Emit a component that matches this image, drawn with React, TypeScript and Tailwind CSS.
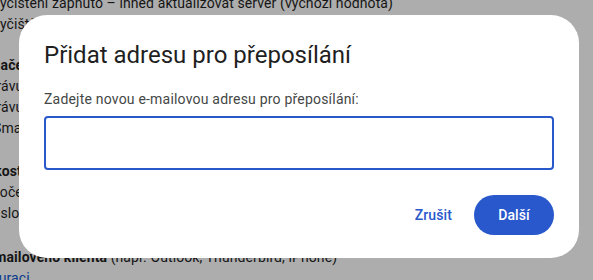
import React from "react";

type PageLine = {
  text: string;
  cut: string;
  bold?: boolean;
  tail?: string;
  link?: boolean;
};

// settings page lying under the dialog; each line is clipped at the left edge
const sections: PageLine[][] = [
  [
    { text: "Vyčištění zapnuto – ihned aktualizovat server (výchozí hodnota)", cut: "-ml-[9px]" },
    { text: "Vyčištění vypnuto – počkat, až klient aktualizuje server", cut: "-ml-[9px]" },
  ],
  [
    { text: "Značení zprávy jako smazané a vyčištěné ze složky IMAP:", cut: "-ml-[16px]", bold: true },
    { text: "Zprávu archivovat (výchozí hodnota)", cut: "-ml-[20px]" },
    { text: "Zprávu přesunout do koše", cut: "-ml-[20px]" },
    { text: "Smazat zprávu okamžitě a navždy", cut: "-ml-[7px]" },
  ],
  [
    { text: "Velikosti složek", cut: "-ml-[30px]", bold: true },
    { text: "Počet zpráv ve složkách IMAP neomezovat (výchozí hodnota)", cut: "-ml-[9px]" },
    { text: "Omezit složky IMAP tak, aby obsahovaly nejvýše tento počet zpráv", cut: "-ml-[48px]" },
  ],
  [
    {
      text: "Konfigurace e-mailového klienta",
      tail: " (např. Outlook, Thunderbird, iPhone)",
      cut: "-ml-[100px]",
      bold: true,
    },
    { text: "Pokyny ke konfiguraci", cut: "-ml-[108px]", link: true },
  ],
];

const sectionGap = ["mb-[20px]", "mb-[22px]", "mb-[23px]", ""];

function SettingsPage() {
  return (
    <div className="-mt-[7px] text-[14px] leading-[21px] tracking-[0.1px] text-[#1f1f1f]">
      {sections.map((lines, i) => (
        <div key={i} className={sectionGap[i]}>
          {lines.map((line) => (
            <p key={line.text} className={`${line.cut} whitespace-nowrap`}>
              {line.link ? (
                <span className="text-[#0b57d0] underline">{line.text}</span>
              ) : (
                <span className={line.bold ? "font-bold" : ""}>{line.text}</span>
              )}
              {line.tail ? <span>{line.tail}</span> : null}
            </p>
          ))}
        </div>
      ))}
    </div>
  );
}

function ForwardingDialog() {
  return (
    <div className="flex w-[560px] flex-col rounded-[28px] bg-white px-[25px] pb-[23px] pt-[24px]">
      <h2 className="text-[24px] font-normal leading-[32px] text-[#1f1f1f]">
        Přidat adresu pro přeposílání
      </h2>
      <label
        htmlFor="forward-to"
        className="mt-[18px] text-[14px] leading-[20px] tracking-[0.2px] text-[#444746]"
      >
        Zadejte novou e-mailovou adresu pro přeposílání:
      </label>
      <input
        id="forward-to"
        type="email"
        className="mt-[7px] h-[54px] w-full rounded-[4px] border-2 border-[#2858cc] px-4 text-[16px] text-[#1f1f1f] outline-none"
      />
      <div className="mt-[25px] flex items-center justify-end gap-[10px]">
        <button
          type="button"
          className="h-10 rounded-full px-3 text-[14px] font-medium tracking-[0.1px] text-[#2858cc]"
        >
          Zrušit
        </button>
        <button
          type="button"
          className="h-10 w-[80px] rounded-full bg-[#2858cc] text-[14px] font-medium tracking-[0.1px] text-white"
        >
          Další
        </button>
      </div>
    </div>
  );
}

export default function App() {
  return (
    <div
      className="relative h-[280px] w-[593px] overflow-hidden bg-white"
      style={{ fontFamily: "Roboto, 'Noto Sans', Arial, sans-serif" }}
    >
      <SettingsPage />
      <div className="absolute inset-0 bg-black/[0.32] pl-[19px] pt-[15px]">
        <ForwardingDialog />
      </div>
    </div>
  );
}
